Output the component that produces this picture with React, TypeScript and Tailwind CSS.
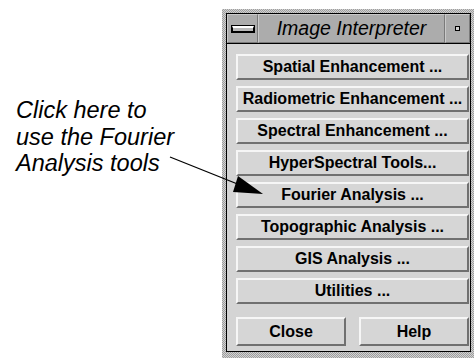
const items = [
  "Spatial Enhancement ...",
  "Radiometric Enhancement ...",
  "Spectral Enhancement ...",
  "HyperSpectral Tools...",
  "Fourier Analysis ...",
  "Topographic Analysis ...",
  "GIS Analysis ...",
  "Utilities ...",
];

function MotifButton({ label, className = "" }: { label: string; className?: string }) {
  return (
    <button
      className={`flex items-center justify-center bg-[#d6d6d6] border-2 border-t-[#f6f6f6] border-l-[#f6f6f6] border-b-[#707070] border-r-[#707070] text-[16px] font-bold text-black leading-none whitespace-nowrap ${className}`}
    >
      {label}
    </button>
  );
}

function TitleBar() {
  return (
    <div className="flex h-[30px] bg-[#acacac] border-b border-black">
      <div className="flex w-[31px] items-center justify-center border-t border-l border-t-[#cacaca] border-l-[#cacaca] border-r border-b border-r-[#7a7a7a] border-b-[#7a7a7a]">
        <div className="h-[6px] w-[22px] bg-[#b8b8b8] border border-black border-t-[2px] border-t-white outline outline-1 outline-black" />
      </div>
      <div className="flex flex-1 items-center justify-center border-t border-l border-t-[#cacaca] border-l-[#cacaca] border-r border-b border-r-[#7a7a7a] border-b-[#7a7a7a]">
        <span className="text-[19.5px] italic text-black leading-none">Image Interpreter</span>
      </div>
      <div className="flex w-[25px] items-center justify-center border-t border-l border-t-[#cacaca] border-l-[#cacaca] border-r border-b border-r-[#7a7a7a] border-b-[#7a7a7a]">
        <div className="h-[5px] w-[5px] bg-[#d0d0d0] border border-black" />
      </div>
    </div>
  );
}

export default function App() {
  return (
    <div className="relative w-[474px] h-[358px] overflow-hidden bg-white font-['Liberation_Sans',Arial,sans-serif]">
      <div className="flex h-full">
        <div className="w-[222px] shrink-0 pl-[16px] pt-[97px]">
          <p className="text-[23.5px] leading-[26.5px] italic text-black">
            Click here to
            <br />
            use the Fourier
            <br />
            Analysis tools
          </p>
        </div>

        <div className="mt-[9px] h-[349px] flex-1 pl-[4px] pt-[4px] pr-[3px] bg-[repeating-conic-gradient(#9e9e9e_0%_25%,#d2d2d2_0%_50%)] bg-size-[2px_2px]">
          <div className="flex h-[339px] flex-col border border-black bg-[#d4d4d4]">
            <TitleBar />
            <div className="flex flex-1 flex-col pl-[9px] pr-[1px] pt-[10px]">
              <div className="flex flex-col gap-[6px]">
                {items.map((it) => (
                  <MotifButton key={it} label={it} className="h-[26px] w-full" />
                ))}
              </div>
              <div className="mt-[13px] flex justify-between">
                <MotifButton label="Close" className="h-[29px] w-[110px]" />
                <MotifButton label="Help" className="h-[29px] w-[110px]" />
              </div>
            </div>
          </div>
        </div>
      </div>

      <svg
        className="pointer-events-none absolute inset-0"
        width="474"
        height="358"
        viewBox="0 0 474 358"
      >
        <line x1="170" y1="157" x2="245" y2="187" stroke="black" strokeWidth="1.3" />
        <polygon points="263,194 238,176 233,192" fill="black" />
      </svg>
    </div>
  );
}
